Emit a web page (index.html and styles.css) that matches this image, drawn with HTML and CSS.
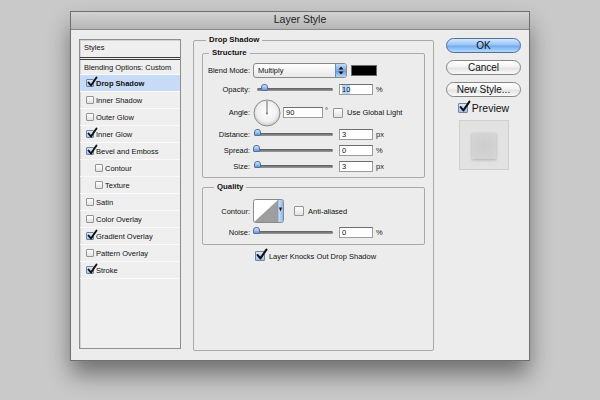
FILE: index.html
```html
<!DOCTYPE html>
<html>
<head>
<meta charset="utf-8">
<title>Layer Style</title>
<link rel="stylesheet" href="styles.css">
</head>
<body>
<div class="window">
  <div class="titlebar">Layer Style</div>
  <div class="content">
    <div class="styles">
      <div class="list-head">Styles</div>
      <div class="list-row blend">Blending Options: Custom</div>
      <div class="list-row sel"><span class="cb on"><svg class="tick" viewBox="0 0 10 10"><path d="M1.5 5.5 L4 8.5 L9.5 0.5"/></svg></span>Drop Shadow</div>
      <div class="list-row"><span class="cb"></span>Inner Shadow</div>
      <div class="list-row"><span class="cb"></span>Outer Glow</div>
      <div class="list-row"><span class="cb on"><svg class="tick" viewBox="0 0 10 10"><path d="M1.5 5.5 L4 8.5 L9.5 0.5"/></svg></span>Inner Glow</div>
      <div class="list-row"><span class="cb on"><svg class="tick" viewBox="0 0 10 10"><path d="M1.5 5.5 L4 8.5 L9.5 0.5"/></svg></span>Bevel and Emboss</div>
      <div class="list-row sub"><span class="cb"></span>Contour</div>
      <div class="list-row sub"><span class="cb"></span>Texture</div>
      <div class="list-row"><span class="cb"></span>Satin</div>
      <div class="list-row"><span class="cb"></span>Color Overlay</div>
      <div class="list-row"><span class="cb on"><svg class="tick" viewBox="0 0 10 10"><path d="M1.5 5.5 L4 8.5 L9.5 0.5"/></svg></span>Gradient Overlay</div>
      <div class="list-row"><span class="cb"></span>Pattern Overlay</div>
      <div class="list-row"><span class="cb on"><svg class="tick" viewBox="0 0 10 10"><path d="M1.5 5.5 L4 8.5 L9.5 0.5"/></svg></span>Stroke</div>
    </div>

    <fieldset class="group main">
      <legend>Drop Shadow</legend>
      <fieldset class="group structure">
        <legend>Structure</legend>
        <div class="form">
          <div class="lbl">Blend Mode:</div>
          <div class="ctl">
            <div class="select">
              <span class="select-text">Multiply</span>
              <span class="stepper"><svg width="10" height="13" viewBox="0 0 10 13"><polygon points="2.5,5.5 5,2.5 7.5,5.5" fill="#111"/><polygon points="2.5,7.5 5,10.5 7.5,7.5" fill="#111"/></svg></span>
            </div>
            <div class="swatch"></div>
          </div>

          <div class="lbl">Opacity:</div>
          <div class="ctl">
            <div class="slider"><span class="thumb" style="left:10%"></span></div>
            <div class="field"><span class="hl">10</span></div>
            <span class="unit">%</span>
          </div>

          <div class="lbl">Angle:</div>
          <div class="ctl">
            <svg class="dial" width="28" height="28" viewBox="0 0 28 28">
              <defs>
                <radialGradient id="dg" cx="50%" cy="45%" r="55%">
                  <stop offset="0" stop-color="#ffffff"/>
                  <stop offset="0.7" stop-color="#f0f0f0"/>
                  <stop offset="1" stop-color="#c9c9c9"/>
                </radialGradient>
              </defs>
              <circle cx="14" cy="14" r="13" fill="url(#dg)" stroke="#8d8d8d"/>
              <line x1="14" y1="14.5" x2="14" y2="2" stroke="#6a6a6a" stroke-width="1"/>
              <circle cx="14" cy="14.5" r="0.9" fill="#6a6a6a"/>
            </svg>
            <div class="field angle">90</div>
            <span class="deg">°</span>
            <span class="cb lg"></span>
            <span class="opt">Use Global Light</span>
          </div>

          <div class="lbl">Distance:</div>
          <div class="ctl">
            <div class="slider"><span class="thumb" style="left:1.2%"></span></div>
            <div class="field">3</div>
            <span class="unit">px</span>
          </div>

          <div class="lbl">Spread:</div>
          <div class="ctl">
            <div class="slider"><span class="thumb" style="left:0%"></span></div>
            <div class="field">0</div>
            <span class="unit">%</span>
          </div>

          <div class="lbl">Size:</div>
          <div class="ctl">
            <div class="slider"><span class="thumb" style="left:1.2%"></span></div>
            <div class="field">3</div>
            <span class="unit">px</span>
          </div>
        </div>
      </fieldset>

      <fieldset class="group quality">
        <legend>Quality</legend>
        <div class="form">
          <div class="lbl">Contour:</div>
          <div class="ctl">
            <svg class="contour" width="31" height="24" viewBox="0 0 31 24">
              <defs>
                <linearGradient id="cbl" x1="0" y1="0" x2="1" y2="0">
                  <stop offset="0" stop-color="#d6e7fa"/>
                  <stop offset="1" stop-color="#8ab6ea"/>
                </linearGradient>
              </defs>
              <rect x="0.5" y="0.5" width="30" height="23" rx="2" fill="#ffffff" stroke="#8a8a8a"/>
              <polygon points="1,23 25,1 25,23" fill="#9e9e9e"/>
              <rect x="25" y="1" width="5" height="22" fill="url(#cbl)"/>
              <line x1="25" y1="1" x2="25" y2="23" stroke="#7f98bb" stroke-width="0.8"/>
              <path d="M26 8.5 L29 8.5 L27.5 12.5 Z" fill="#111"/>
            </svg>
            <span class="cb lg aa"></span>
            <span class="opt">Anti-aliased</span>
          </div>

          <div class="lbl">Noise:</div>
          <div class="ctl">
            <div class="slider"><span class="thumb" style="left:0%"></span></div>
            <div class="field">0</div>
            <span class="unit">%</span>
          </div>
        </div>
      </fieldset>

      <div class="knock">
        <span class="cb lg on"><svg class="tick" viewBox="0 0 10 10"><path d="M1.5 5.5 L4 8.5 L9.5 0.5"/></svg></span>
        <span class="opt">Layer Knocks Out Drop Shadow</span>
      </div>
    </fieldset>

    <div class="actions">
      <div class="btn ok">OK</div>
      <div class="btn">Cancel</div>
      <div class="btn">New Style...</div>
      <div class="preview-toggle">
        <span class="cb lg on"><svg class="tick" viewBox="0 0 10 10"><path d="M1.5 5.5 L4 8.5 L9.5 0.5"/></svg></span>
        <span>Preview</span>
      </div>
      <div class="preview-box"><div class="preview-swatch"></div></div>
    </div>
  </div>
</div>
</body>
</html>
```

FILE: styles.css
```css
html, body {
  margin: 0;
  padding: 0;
}

body {
  background: #c9c9c9;
  font-family: "Liberation Sans", Arial, sans-serif;
  color: #111;
  width: 600px;
  height: 400px;
  overflow: hidden;
}

.window {
  margin: 12px 0 0 71px;
  width: 458px;
  height: 348px;
  background: #ececec;
  box-shadow: 0 0 0 1px #707070, 0 14px 22px rgba(0, 0, 0, 0.45);
  display: flex;
  flex-direction: column;
}

.titlebar {
  height: 18px;
  box-sizing: border-box;
  border-bottom: 1px solid #8c8c8c;
  background: linear-gradient(#d3d3d3, #b5b5b5);
  text-align: center;
  font-size: 10.5px;
  line-height: 15px;
  color: #222;
}

.content {
  display: flex;
  align-items: flex-start;
  padding: 9px 8px 0;
}

/* ---------- styles list ---------- */
.styles {
  flex-shrink: 0;
  width: 102px;
  height: 310px;
  box-sizing: border-box;
  border: 1px solid #8e8e8e;
  box-shadow: inset 1px 1px 0 #d2d2d2;
  background: #efefef;
  font-size: 7.5px;
  color: #111;
}

.list-head {
  height: 17px;
  line-height: 15px;
  padding-left: 4px;
  border-bottom: 3px double #3c3c3c;
}

.list-row {
  height: 16px;
  border-bottom: 1px solid #fafafa;
  display: flex;
  align-items: center;
  padding-left: 6px;
  white-space: nowrap;
}

.list-row.blend {
  height: 14px;
  padding-left: 4px;
}

.list-row.sel {
  background: #c7dbf6;
  font-weight: bold;
}

.list-row.sub {
  padding-left: 15px;
}

.list-row .cb {
  margin-right: 2px;
}

/* ---------- checkboxes ---------- */
.cb {
  position: relative;
  flex-shrink: 0;
  width: 8px;
  height: 8px;
  box-sizing: border-box;
  border: 1px solid #949494;
  border-radius: 1px;
  background: linear-gradient(#ffffff, #e2e2e2);
}

.cb.on {
  background: linear-gradient(#dde9f8, #a6c3e8);
  border-color: #6f85a6;
}

.cb.lg {
  width: 10px;
  height: 10px;
}

.tick {
  position: absolute;
  left: 0;
  top: -3px;
  width: 10px;
  height: 10px;
  overflow: visible;
}

.cb.lg .tick {
  width: 11px;
  height: 11px;
  top: -3px;
}

.tick path {
  fill: none;
  stroke: #111;
  stroke-width: 1.9;
  stroke-linecap: round;
  stroke-linejoin: round;
}

/* ---------- group boxes ---------- */
.group {
  margin: 0;
  padding: 0;
  min-width: 0;
  border: 1px solid #a9a9a9;
  border-radius: 2px;
}

.group > legend {
  font-size: 7.8px;
  font-weight: bold;
  line-height: 10px;
  padding: 0 3px;
  color: #111;
}

.main {
  flex-shrink: 0;
  width: 241px;
  height: 316px;
  box-sizing: border-box;
  margin: -4px 0 0 12px;
  padding: 0 8px;
}

.main > legend {
  margin-left: 4px;
}

.structure {
  margin-top: 3px;
  height: 130px;
  box-sizing: border-box;
  padding-top: 5px;
}

.structure > legend {
  margin-left: 6px;
}

.quality {
  margin-top: 4px;
  height: 63px;
  box-sizing: border-box;
  padding-top: 7px;
}

.quality > legend {
  margin-left: 11px;
}

.form {
  display: grid;
  grid-template-columns: 47px auto;
  column-gap: 3px;
  align-items: center;
  font-size: 7.5px;
}

.structure .form {
  grid-template-rows: 15px 23px 23px 21px 11px 21px;
}

.quality .form {
  grid-template-rows: 24px 18px;
}

.lbl {
  text-align: right;
  white-space: nowrap;
}

.ctl {
  display: flex;
  align-items: center;
  white-space: nowrap;
}

/* ---------- controls ---------- */
.select {
  width: 94px;
  height: 15px;
  box-sizing: border-box;
  border: 1px solid #8a8a8a;
  border-radius: 3px;
  background: linear-gradient(#ffffff, #e8e8e8);
  display: flex;
  align-items: center;
  overflow: hidden;
}

.select-text {
  flex: 1;
  padding-left: 4px;
}

.stepper {
  width: 11px;
  align-self: stretch;
  box-sizing: border-box;
  border-left: 1px solid #6d8bb4;
  background: linear-gradient(#c4ddf8, #78abe8 50%, #6198e0 51%, #b3d5f8);
  display: flex;
  align-items: center;
  justify-content: center;
}

.swatch {
  width: 26px;
  height: 11px;
  box-sizing: border-box;
  margin-left: 4px;
  background: #000;
  border: 1px solid #6a6a6a;
}

.slider {
  position: relative;
  width: 76px;
  height: 3px;
  margin-left: 4px;
  border-radius: 2px;
  background: linear-gradient(#5a5a5a, #9c9c9c);
}

.thumb {
  position: absolute;
  top: -4px;
  width: 5px;
  height: 5px;
  margin-left: -4px;
  border: 1px solid #4f72a3;
  border-radius: 3px 3px 1px 1px;
  background: linear-gradient(#d3e4f8, #6a9ad9);
}

.field {
  width: 34px;
  height: 11px;
  box-sizing: border-box;
  margin-left: 6px;
  padding-left: 2px;
  background: #ffffff;
  border: 1px solid #9c9c9c;
  border-top-color: #6e6e6e;
  line-height: 9px;
}

.field.angle {
  width: 40px;
  margin-left: 2px;
}

.hl {
  background: #b5d4fa;
}

.unit {
  margin-left: 3px;
  color: #222;
}

.deg {
  margin-left: 2px;
  align-self: flex-start;
  margin-top: 7px;
}

.dial {
  flex-shrink: 0;
}

.ctl .cb.lg {
  margin-left: 5px;
}

.ctl .cb.aa {
  margin-left: 10px;
}

.opt {
  margin-left: 4px;
}

.contour {
  flex-shrink: 0;
}

.knock {
  display: flex;
  justify-content: center;
  align-items: center;
  height: 14px;
  margin-top: 4px;
  padding-left: 4px;
  font-size: 7.5px;
  white-space: nowrap;
}

/* ---------- right column ---------- */
.actions {
  flex-shrink: 0;
  width: 75px;
  margin: -1px 0 0 12px;
  display: flex;
  flex-direction: column;
  align-items: center;
}

.btn {
  width: 75px;
  height: 15px;
  box-sizing: border-box;
  margin-bottom: 7px;
  border: 1px solid #858585;
  border-radius: 8px;
  background: linear-gradient(#ffffff, #f3f3f3 45%, #e3e3e3 55%, #fbfbfb);
  font-size: 10px;
  line-height: 13px;
  text-align: center;
  color: #111;
  white-space: nowrap;
}

.btn.ok {
  border-color: #4f6f9d;
  background: linear-gradient(#d4e8fd, #98c5f4 45%, #73acee 55%, #b4dafd);
}

.btn:last-of-type {
  margin-bottom: 0;
}

.preview-toggle {
  display: flex;
  align-items: center;
  gap: 4px;
  height: 10px;
  margin-top: -1px;
  font-size: 10.5px;
}

.preview-box {
  margin-top: 7px;
  width: 50px;
  height: 50px;
  box-sizing: border-box;
  border: 1px solid #cfcfcf;
  background: #e2e2e2;
  display: flex;
  align-items: center;
  justify-content: center;
}

.preview-swatch {
  width: 24px;
  height: 26px;
  margin: 2px 0 0 1px;
  background: radial-gradient(#cdcdcd, #d6d6d6);
  box-shadow: 0 1px 3px rgba(0, 0, 0, 0.22);
}
```
